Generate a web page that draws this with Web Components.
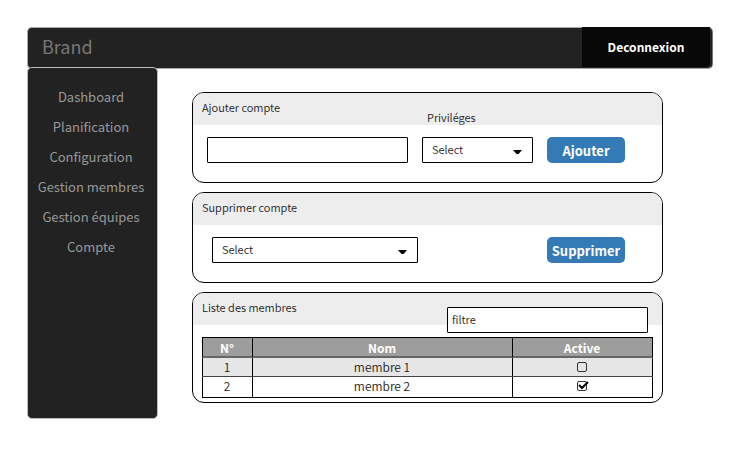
<!DOCTYPE html>
<html lang="fr">
<head>
<meta charset="utf-8">
<title>Gestion des comptes</title>
<style>
  body {
    margin: 0;
    padding: 27px 29px 27px 27px;
    background: #fff;
    color: #222;
    font-family: "Noto Sans CJK SC", "Noto Sans", sans-serif;
    font-size: 11px;
    font-weight: 350;
    line-height: 16px;
  }
</style>
</head>
<body>
<account-page></account-page>
<script>
const define = (name, html, setup) => {
  const template = document.createElement('template');
  template.innerHTML = html;
  customElements.define(name, class extends HTMLElement {
    connectedCallback() {
      if (this.shadowRoot) return;
      const root = this.attachShadow({ mode: 'open' });
      root.append(template.content.cloneNode(true));
      if (setup) setup(this, root);
    }
  });
};

define('top-bar', `
  <style>
    :host { display: flex; justify-content: space-between; box-sizing: border-box; height: 42px;
      border: 1px solid #aaa; border-right-color: #222; border-radius: 5px; background: #222;
      box-shadow: 1px 0 0 #777; }
    a { padding-left: 14px; color: #777; font-size: 18px; font-weight: 400; line-height: 37px; text-decoration: none; }
    button { width: 128px; height: 40px; margin: -1px 1px 0 0; padding: 0 0 2px; border: 0; background: #080808;
      border-radius: 0 0 4px 0; color: #fff; font-family: inherit; font-size: 12px; font-weight: 700; }
  </style>
  <a href="#"><slot></slot></a>
  <button type="button">Deconnexion</button>`);

define('side-nav', `
  <style>
    :host { display: block; box-sizing: border-box; min-height: 352px; padding-top: 14px;
      border: 1px solid #bbb; border-radius: 5px; background: #222; }
    nav { display: flex; flex-direction: column; }
    a { color: #999; font-size: 13px; font-weight: 400; line-height: 30px; text-align: center; text-decoration: none; padding-right: 3px; }
  </style>
  <nav></nav>`, (host, root) => {
  const nav = root.querySelector('nav');
  for (const text of host.getAttribute('items').split(',')) {
    const a = document.createElement('a');
    a.href = '#';
    a.textContent = text;
    nav.append(a);
  }
});

define('panel-card', `
  <style>
    :host { display: block; border: 1px solid #000; border-radius: 12px; background: #fff; }
    h2 { margin: 0; padding: 6px 9px 10px; border-radius: 11px 11px 0 0; background: #ededed;
      font-size: inherit; font-weight: inherit; }
  </style>
  <h2></h2>
  <slot></slot>`, (host, root) => {
  root.querySelector('h2').textContent = host.getAttribute('heading');
});

define('text-field', `
  <style>
    :host { display: block; }
    input { display: block; box-sizing: border-box; width: 100%; height: 26px; padding: 0 4px 2px;
      border: 1px solid #000; border-radius: 1px; background: #fff; color: inherit;
      font-family: inherit; font-size: 11px; font-weight: inherit; }
  </style>
  <input type="text">`, (host, root) => {
  const input = root.querySelector('input');
  input.value = host.getAttribute('value') || '';
  input.setAttribute('aria-label', host.getAttribute('name'));
});

define('select-field', `
  <style>
    :host { display: flex; flex-direction: column; gap: 12px; }
    label { padding-left: 5px; }
    label:empty { display: none; }
    div { display: grid; align-items: center; }
    select, svg { grid-area: 1 / 1; }
    select { appearance: none; box-sizing: border-box; width: 100%; height: 26px; margin: 0; padding: 0 9px 2px;
      border: 1px solid #000; border-radius: 1px; background: #fff; color: inherit;
      font-family: inherit; font-size: 11px; font-weight: inherit; }
    svg { justify-self: end; margin: 4px 11px 0 0; pointer-events: none; }
  </style>
  <label for="choice"></label>
  <div>
    <select id="choice"><option>Select</option></select>
    <svg width="9" height="4" viewBox="0 0 9 4"><path d="M0 0H9L5.500 4H3.500Z" fill="#000"/></svg>
  </div>`, (host, root) => {
  root.querySelector('label').textContent = host.getAttribute('label') || '';
  root.querySelector('select').setAttribute('aria-label', host.getAttribute('label') || host.getAttribute('name'));
});

define('action-button', `
  <style>
    :host { display: block; width: 78px; }
    button { display: block; width: 100%; height: 26px; padding: 1px 0 0; border: 0; border-radius: 5px;
      background: #337ab7; color: #fff; font-family: inherit; font-size: 13px; font-weight: 700; line-height: 24px; }
  </style>
  <button type="button"><slot></slot></button>`);

define('check-mark', `
  <style>
    :host { display: inline-grid; width: 13px; height: 13px; vertical-align: top; }
    input, svg { grid-area: 1 / 1; }
    input { appearance: none; width: 13px; height: 13px; margin: 0; }
    svg { pointer-events: none; }
    path { display: none; }
    input:checked + svg path { display: block; }
  </style>
  <input type="checkbox">
  <svg width="13" height="13" viewBox="0 0 13 13" fill="none">
    <rect x="1.500" y="1.500" width="9" height="9" rx="1.500" stroke="#333"/>
    <path d="M3 5L6 8L12 2" stroke="#000" stroke-width="2"/>
  </svg>`, (host, root) => {
  const input = root.querySelector('input');
  input.checked = host.hasAttribute('checked');
  input.setAttribute('aria-label', host.getAttribute('name'));
});

define('members-table', `
  <style>
    :host { display: block; }
    table { width: 100%; table-layout: fixed; border-collapse: collapse; border: 1px solid #000;
      font-size: 12px; line-height: 16px; text-align: center; }
    th, td { box-sizing: border-box; height: 20px; padding: 0 1px 0 0; border: 1px solid #000; }
    th { background: #9d9d9d; color: #fff; border-bottom-color: #666; box-shadow: inset 0 -1px #666; }
    tbody tr:first-child td { height: 19px; background: #e6e6e6; border-bottom-color: #444; }
    tbody tr:last-child td { height: 21px; padding-bottom: 2px; }
    .number { width: 50px; }
    .active { width: 140px; }
    td:last-child { line-height: 0; }
  </style>
  <table>
    <thead><tr><th class="number">N°</th><th>Nom</th><th class="active">Active</th></tr></thead>
    <tbody>
      <tr><td>1</td><td>membre 1</td><td><check-mark name="membre 1"></check-mark></td></tr>
      <tr><td>2</td><td>membre 2</td><td><check-mark name="membre 2" checked></check-mark></td></tr>
    </tbody>
  </table>`);

define('account-page', `
  <style>
    :host { display: block; }
    .layout { display: grid; grid-template-columns: 131px 1fr; column-gap: 34px; align-items: start; margin-top: -2px; }
    main { display: flex; flex-direction: column; gap: 9px; padding: 25px 49px 0 0; }
    .row { display: flex; align-items: flex-end; gap: 14px; padding: 12px 37px 19px 14px; }
    .row text-field { flex: 1; }
    .privilege { width: 111px; margin-top: -28px; }
    .remove { justify-content: space-between; padding-left: 19px; }
    .remove select-field { flex: 0 1 206px; }
    .list { display: flex; flex-direction: column; gap: 4px; padding: 0 9px 4px; }
    .filter { align-self: flex-end; width: 201px; margin: -18px 5px 0 0; }
  </style>
  <top-bar>Brand</top-bar>
  <div class="layout">
    <side-nav items="Dashboard,Planification,Configuration,Gestion membres,Gestion équipes,Compte"></side-nav>
    <main>
      <panel-card heading="Ajouter compte">
        <div class="row">
          <text-field name="Compte"></text-field>
          <select-field class="privilege" label="Priviléges"></select-field>
          <action-button>Ajouter</action-button>
        </div>
      </panel-card>
      <panel-card heading="Supprimer compte">
        <div class="row remove">
          <select-field name="Compte"></select-field>
          <action-button>Supprimer</action-button>
        </div>
      </panel-card>
      <panel-card heading="Liste des membres">
        <div class="list">
          <text-field class="filter" name="Filtre" value="filtre"></text-field>
          <members-table></members-table>
        </div>
      </panel-card>
    </main>
  </div>`);
</script>
</body>
</html>
